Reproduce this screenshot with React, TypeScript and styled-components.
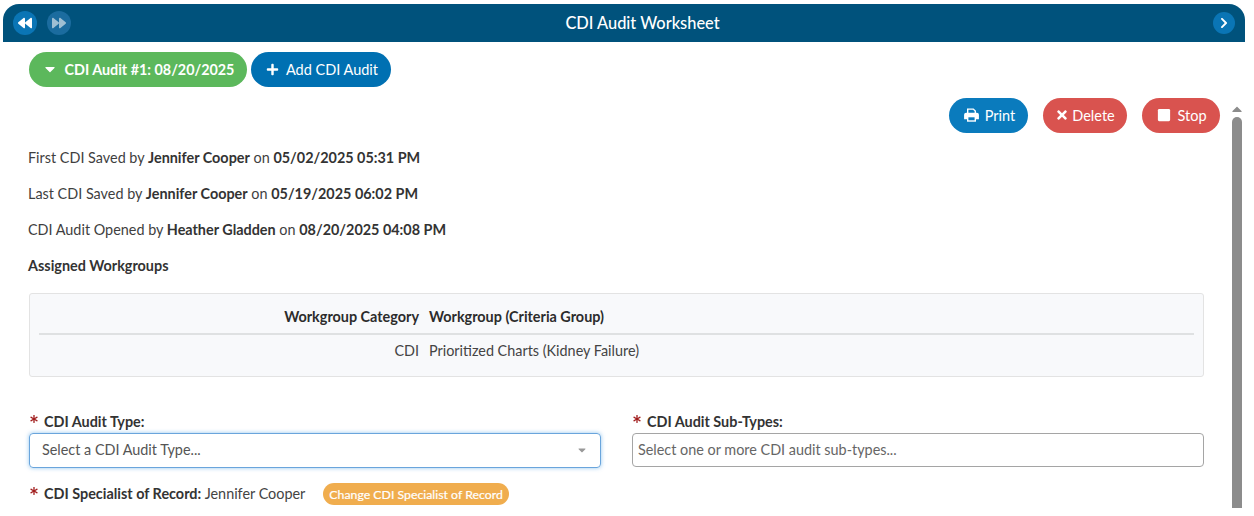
import React, { FC, ReactNode } from "react";
import styled, { createGlobalStyle } from "styled-components";
import { FaBackward, FaForward, FaChevronRight, FaCaretDown, FaPlus, FaTimes, FaStop, FaCaretUp, FaAsterisk } from "react-icons/fa";

const GlobalStyle = createGlobalStyle`
  html, body {
    margin: 0;
    padding: 0;
    background: #fff;
    overflow: hidden;
  }
  body {
    font-family: Lato, "Open Sans", sans-serif;
    font-size: 14px;
    color: #333;
  }
`;

const Page = styled.div`
  width: 1254px;
  height: 516px;
  padding: 4px 9px 0 3px;
  box-sizing: border-box;
  display: flex;
  flex-direction: column;
`;

const Header = styled.header`
  height: 38px;
  flex: none;
  background: #00527c;
  border-radius: 16px 16px 0 0;
  display: grid;
  grid-template-columns: 1fr auto 1fr;
  align-items: center;
  padding: 0 10px;
  color: #fff;
`;

const HeaderGroup = styled.div<{ $end?: boolean }>`
  display: flex;
  gap: 10px;
  justify-content: ${({ $end }) => ($end ? "flex-end" : "flex-start")};
`;

const Title = styled.h1`
  margin: 0;
  padding: 0 0 1px 37px;
  font-size: 16.4px;
  font-weight: 500;
`;

const RoundButton = styled.span<{ $dim?: boolean; $small?: boolean }>`
  width: ${({ $small }) => ($small ? 22 : 24)}px;
  height: ${({ $small }) => ($small ? 22 : 24)}px;
  border-radius: 50%;
  display: flex;
  align-items: center;
  justify-content: center;
  font-size: ${({ $small }) => ($small ? 12 : 14)}px;
  background: ${({ $dim }) => ($dim ? "#1b6c9f" : "#0a75b5")};
  color: ${({ $dim }) => ($dim ? "#9fbfd3" : "#fff")};
`;

const Main = styled.div`
  flex: 1;
  display: flex;
  min-height: 0;
`;

const Content = styled.div`
  flex: 1;
  padding: 10px 12px 0 26px;
  min-width: 0;
`;

const TabRow = styled.div`
  display: flex;
  gap: 4px;
`;

const Pill = styled.button<{ $color: string; $bold?: boolean; $gap?: number; $inset?: number }>`
  height: 35px;
  padding: 0 0 1px ${({ $inset }) => $inset ?? 0}px;
  border: none;
  border-radius: 18px;
  background: ${({ $color }) => $color};
  color: #fff;
  font-family: inherit;
  font-size: 14.5px;
  font-weight: ${({ $bold }) => ($bold ? 700 : 400)};
  display: inline-flex;
  align-items: center;
  justify-content: center;
  gap: ${({ $gap }) => $gap ?? 7}px;
  white-space: nowrap;
  svg {
    flex: none;
  }
`;

const TabPill = styled(Pill)`
  width: 218px;
  font-size: 14.35px;
`;

const AddPill = styled(Pill)`
  width: 140px;
`;

const ActionRow = styled.div`
  display: flex;
  justify-content: flex-end;
  gap: 15px;
  margin-top: 11px;
`;

const ActionPill = styled(Pill)<{ $w: number }>`
  width: ${({ $w }) => $w}px;
`;

const Line = styled.p<{ $first?: boolean }>`
  margin: ${({ $first }) => ($first ? "16px" : "0")} 0 0 -1px;
  height: 36px;
  line-height: 18px;
  font-size: 14.4px;
  color: #3f3f3f;
  b {
    font-weight: 700;
    color: #333;
  }
`;

const InfoPanel = styled.div`
  margin: 0 16px 0 0;
  height: 84px;
  box-sizing: border-box;
  background: #f8f9fb;
  border: 1px solid #e3e3e3;
  border-radius: 3px;
  padding: 7px 9px 0;
`;

const TableRow = styled.div<{ $head?: boolean }>`
  display: grid;
  grid-template-columns: 380px 1fr;
  column-gap: 10px;
  height: ${({ $head }) => ($head ? "34px" : "30px")};
  padding-bottom: ${({ $head }) => ($head ? "1px" : "0")};
  box-sizing: border-box;
  align-items: center;
  font-size: 14.4px;
  font-weight: ${({ $head }) => ($head ? 700 : 400)};
  color: ${({ $head }) => ($head ? "#2c2c2c" : "#444")};
  border-bottom: ${({ $head }) => ($head ? "2px solid #dfe1e2" : "none")};
`;

const RightCell = styled.span`
  text-align: right;
`;

const FieldGrid = styled.div`
  display: grid;
  grid-template-columns: 572px 572px;
  column-gap: 31px;
  margin-top: 34px;
`;

const FieldLabel = styled.label`
  display: flex;
  align-items: center;
  height: 22px;
  padding-bottom: 2px;
  box-sizing: border-box;
  font-size: 14.4px;
  font-weight: 700;
  color: #333;
  white-space: pre;
  span {
    font-weight: 400;
    color: #444;
  }
`;

const Req = styled.i`
  color: #a11d1d;
  display: inline-flex;
  font-size: 8px;
  margin: 0 6px 4px 1px;
`;

const SelectBox = styled.div`
  height: 35px;
  box-sizing: border-box;
  border: 1px solid #6aa5dc;
  border-radius: 4px;
  box-shadow: 0 0 4px rgba(102, 175, 233, 0.7);
  display: flex;
  align-items: center;
  justify-content: space-between;
  padding: 0 12px 2px;
  font-size: 14.4px;
  color: #555;
  svg {
    color: #999;
    font-size: 12px;
  }
`;

const MultiBox = styled.div`
  height: 34px;
  box-sizing: border-box;
  border: 1px solid #a5a5a5;
  border-radius: 4px;
  display: flex;
  align-items: center;
  padding: 0 5px 2px;
  font-size: 14.4px;
  color: #666;
`;

const SpecialistRow = styled.div`
  margin-top: 15px;
  display: flex;
  align-items: center;
  height: 22px;
`;

const Badge = styled.span`
  margin-left: 18px;
  height: 22px;
  padding: 0 6px;
  border-radius: 11px;
  background: #f0ad4e;
  color: #fff;
  font-size: 12.3px;
  font-weight: 400;
  -webkit-text-stroke: 0.2px #fff;
  display: inline-flex;
  align-items: center;
  white-space: nowrap;
`;

const Scrollbar = styled.div`
  width: 10px;
  flex: none;
  margin: 59px 3px 8px 0;
  display: flex;
  flex-direction: column;
  align-items: center;
  color: #8c8c8c;
`;

const ScrollArrow = styled.div`
  height: 16px;
  display: flex;
  align-items: center;
  font-size: 16px;
`;

const ScrollThumb = styled.div`
  flex: 1;
  width: 100%;
  background: #8c8c8c;
  border-radius: 5px 5px 0 0;
`;

const PrintIcon: FC = () => (
  <svg width="15" height="14" viewBox="0 0 15 14" fill="none" stroke="currentColor">
    <path d="M3.7 6V1.1h5.6l2 2V6" strokeWidth="1.4" />
    <path d="M3.2 10.6H.8V6.8c0-.8.5-1.3 1.3-1.3h10.8c.8 0 1.3.5 1.3 1.3v3.8h-2.4" strokeWidth="1.4" fill="currentColor" />
    <rect x="3.7" y="8.6" width="7.6" height="4.4" strokeWidth="1.4" fill="#0a7bbd" />
  </svg>
);

const Required: FC<{ children: ReactNode }> = ({ children }) => (
  <FieldLabel>
    <Req><FaAsterisk /></Req>
    {children}
  </FieldLabel>
);

export default function App() {
  return (
    <Page>
      <GlobalStyle />
      <Header>
        <HeaderGroup>
          <RoundButton><FaBackward /></RoundButton>
          <RoundButton $dim><FaForward /></RoundButton>
        </HeaderGroup>
        <Title>CDI Audit Worksheet</Title>
        <HeaderGroup $end>
          <RoundButton $small><FaChevronRight /></RoundButton>
        </HeaderGroup>
      </Header>
      <Main>
        <Content>
          <TabRow>
            <TabPill $color="#5cb85c" $bold><FaCaretDown size={16} />CDI Audit #1: 08/20/2025</TabPill>
            <AddPill $color="#0070b2" $inset={2}><FaPlus size={13} />Add CDI Audit</AddPill>
          </TabRow>
          <ActionRow>
            <ActionPill $w={79} $color="#0a7bbd" $gap={6} $inset={2}><PrintIcon />Print</ActionPill>
            <ActionPill $w={84} $color="#d9534f" $gap={3}><FaTimes size={14} />Delete</ActionPill>
            <ActionPill $w={78} $color="#d9534f" $gap={6} $inset={2}><FaStop size={14} />Stop</ActionPill>
          </ActionRow>
          <Line $first>First CDI Saved by <b>Jennifer Cooper</b> on <b>05/02/2025 05:31 PM</b></Line>
          <Line>Last CDI Saved by <b>Jennifer Cooper</b> on <b>05/19/2025 06:02 PM</b></Line>
          <Line>CDI Audit Opened by <b>Heather Gladden</b> on <b>08/20/2025 04:08 PM</b></Line>
          <Line><b>Assigned Workgroups</b></Line>
          <InfoPanel>
            <TableRow $head>
              <RightCell>Workgroup Category</RightCell>
              <span>Workgroup (Criteria Group)</span>
            </TableRow>
            <TableRow>
              <RightCell>CDI</RightCell>
              <span>Prioritized Charts (Kidney Failure)</span>
            </TableRow>
          </InfoPanel>
          <FieldGrid>
            <div>
              <Required>CDI Audit Type:</Required>
              <SelectBox>Select a CDI Audit Type...<FaCaretDown /></SelectBox>
            </div>
            <div>
              <Required>CDI Audit Sub-Types:</Required>
              <MultiBox>Select one or more CDI audit sub-types...</MultiBox>
            </div>
          </FieldGrid>
          <SpecialistRow>
            <Required>CDI Specialist of Record: <span>Jennifer Cooper</span></Required>
            <Badge>Change CDI Specialist of Record</Badge>
          </SpecialistRow>
        </Content>
        <Scrollbar>
          <ScrollArrow><FaCaretUp /></ScrollArrow>
          <ScrollThumb />
        </Scrollbar>
      </Main>
    </Page>
  );
}
